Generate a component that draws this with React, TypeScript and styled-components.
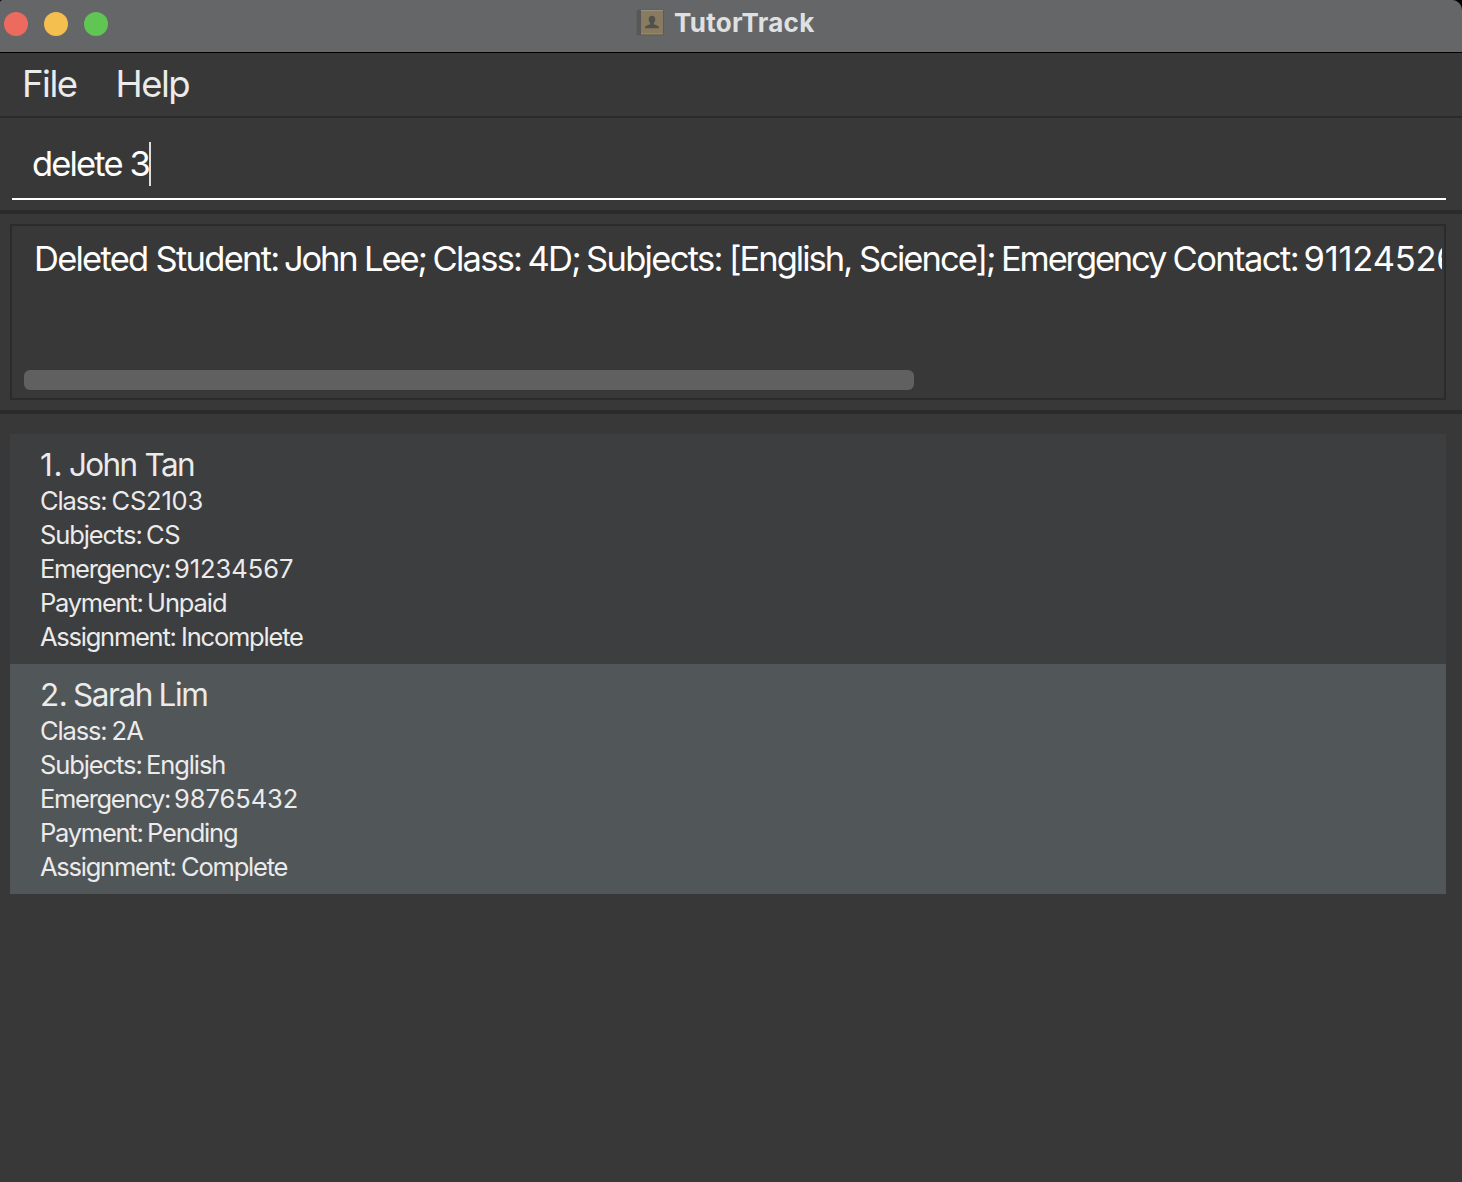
import React from "react";
import styled, { createGlobalStyle } from "styled-components";

const GlobalStyle = createGlobalStyle`
  html, body { margin: 0; padding: 0; background: #000; }
  * { box-sizing: border-box; }
`;

const Window = styled.div`
  width: 1462px;
  height: 1182px;
  display: flex;
  flex-direction: column;
  overflow: hidden;
  background: #383838;
  border-bottom: 1px solid #3e383c;
  border-radius: 3px 10px 0 0;
  font-family: Inter, "Liberation Sans", sans-serif;
  font-weight: 400;
  white-space: pre;
`;

const TitleBar = styled.header`
  flex: none;
  height: 53px;
  display: grid;
  grid-template-columns: 636px 1fr;
  background: #656667;
  border-bottom: 1px solid #000;
`;

const Lights = styled.div`
  display: flex;
  gap: 16px;
  padding: 12px 0 0 4px;
`;

const Light = styled.span<{ $color: string }>`
  width: 24px;
  height: 24px;
  border-radius: 50%;
  background: ${(p) => p.$color};
`;

const TitleGroup = styled.div`
  display: flex;
  align-items: flex-start;
  gap: 10px;
  padding-top: 9px;
`;

const Title = styled.h1`
  margin: -1px 0 0;
  font-size: 26px;
  line-height: 30px;
  font-weight: 700;
  letter-spacing: 0.3px;
  color: #dfe0e2;
`;

const MenuBar = styled.nav`
  flex: none;
  height: 65px;
  display: flex;
  gap: 39px;
  padding: 8px 0 0 22px;
  border-bottom: 2px solid #2b2b2b;
`;

const MenuItem = styled.span`
  font-size: 36.5px;
  line-height: 46px;
  letter-spacing: -1.5px;
  color: #ebebeb;
`;

const CommandPane = styled.section`
  flex: none;
  height: 96px;
  padding: 12px 16px 0 12px;
  border-bottom: 4px solid #2b2b2b;
`;

const CommandField = styled.div`
  height: 70px;
  display: flex;
  padding: 12px 0 0 20px;
  border-bottom: 2px solid #fff;
  font-size: 34.5px;
  line-height: 44px;
  color: #fff;
`;

const Caret = styled.span`
  width: 2px;
  height: 44px;
  background: #ddd;
`;

const ResultPane = styled.section`
  flex: none;
  height: 200px;
  padding: 10px 16px 0 10px;
  border-bottom: 4px solid #2b2b2b;
`;

const ResultBox = styled.div`
  height: 176px;
  display: flex;
  flex-direction: column;
  justify-content: space-between;
  padding: 11px 2px 8px 12px;
  border: 2px solid #2b2b2b;
`;

const ResultText = styled.div`
  height: 50px;
  display: flex;
  padding-left: 10px;
  overflow: hidden;
  font-size: 34.5px;
  line-height: 44px;
  color: #fff;
`;

const ScrollThumb = styled.div`
  width: 890px;
  height: 20px;
  border-radius: 6px;
  background: #606060;
`;

const StudentList = styled.ol`
  list-style: none;
  margin: 0;
  padding: 20px 16px 0 10px;
`;

const StudentCard = styled.li<{ $selected: boolean }>`
  height: 230px;
  padding: 11px 0 0 30px;
  background: ${(p) => (p.$selected ? "#515658" : "#3c3e3f")};
`;

const StudentName = styled.h2`
  display: flex;
  height: 39px;
  margin: 0;
  font-size: 31.5px;
  line-height: 40px;
  font-weight: 400;
  color: #ebebeb;
`;

const Detail = styled.div`
  display: flex;
  font-size: 25.5px;
  line-height: 34px;
  color: #ebebeb;
`;

const Word = styled.span<{ $width: number; $spacing: number }>`
  flex: none;
  width: ${(p) => p.$width}px;
  letter-spacing: ${(p) => p.$spacing}px;
`;

/* text, advance width, letter spacing */
type Run = [string, number, number];

const Runs = ({ runs }: { runs: Run[] }) => (
  <>
    {runs.map(([text, width, spacing]) => (
      <Word key={text} $width={width} $spacing={spacing}>
        {text}
      </Word>
    ))}
  </>
);

const ContactBook = () => (
  <svg width="28" height="28" viewBox="0 0 28 28">
    <rect x="0.5" y="0.5" width="27.5" height="26" rx="1.5" fill="#5d5b57" />
    <rect x="1" y="1" width="4" height="25" fill="#575757" />
    <rect x="5" y="1" width="22" height="24" fill="#897b60" />
    <rect x="5" y="1" width="22" height="1" fill="#969080" />
    <rect x="5" y="24" width="22" height="1.5" fill="#9a8455" />
    <path
      d="M16 6.7c2.1 0 3.300 1.500 3.300 3.600 0 1.600-.7 2.800-1.500 3.500v1.400l3.800 1.500c1 .4 1.400 1.200 1.400 2.600H9c0-1.400.3-2.200 1.300-2.600l3.800-1.500v-1.400c-.8-.7-1.500-1.900-1.500-3.500 0-2.100 1.300-3.600 3.400-3.600z"
      fill="#52504c"
    />
  </svg>
);

const command: Run[] = [
  ["delete ", 97.5, -1.85],
  ["3", 19.5, 0],
];

const result: Run[] = [
  ["Deleted ", 121.5, -1.75],
  ["Student: ", 128.5, -1.7],
  ["John ", 80, -2.2],
  ["Lee; ", 68.5, -2.1],
  ["Class: ", 95, -1.75],
  ["4D; ", 58.5, -1.7],
  ["Subjects: ", 143, -1.7],
  ["[English, ", 130, -2],
  ["Science]; ", 142, -1.95],
  ["Emergency ", 171.5, -2.15],
  ["Contact: ", 131, -1.55],
  ["91124526", 140, -0.2],
];

type Student = { selected: boolean; name: Run[]; fields: Run[][] };

const students: Student[] = [
  {
    selected: false,
    name: [
      ["1. ", 29, 0.6],
      ["John ", 75.5, -1.7],
      ["Tan", 60, -1.6],
    ],
    fields: [
      [["Class: ", 71.5, -1.15], ["CS2103", 120, -0.2]],
      [["Subjects: ", 106, -1.1], ["CS", 120, -0.5]],
      [["Emergency: ", 134, -1.3], ["91234567", 140, -0.05]],
      [["Payment: ", 107, -1.25], ["Unpaid", 120, -1.1]],
      [["Assignment: ", 141, -1.25], ["Incomplete", 140, -1.2]],
    ],
  },
  {
    selected: true,
    name: [
      ["2. ", 33, -0.5],
      ["Sarah ", 85.5, -1.4],
      ["Lim", 60, -1.4],
    ],
    fields: [
      [["Class: ", 71.5, -1.15], ["2A", 120, -0.8]],
      [["Subjects: ", 106, -1.1], ["English", 120, -1.1]],
      [["Emergency: ", 134, -1.3], ["98765432", 140, -0.05]],
      [["Payment: ", 107, -1.25], ["Pending", 120, -1.15]],
      [["Assignment: ", 141, -1.25], ["Complete", 140, -1.2]],
    ],
  },
];

export default function App() {
  return (
    <>
      <GlobalStyle />
      <Window>
        <TitleBar>
          <Lights>
            <Light $color="#ed6a5e" />
            <Light $color="#f5bf4f" />
            <Light $color="#61c554" />
          </Lights>
          <TitleGroup>
            <ContactBook />
            <Title>TutorTrack</Title>
          </TitleGroup>
        </TitleBar>
        <MenuBar>
          <MenuItem>File</MenuItem>
          <MenuItem>Help</MenuItem>
        </MenuBar>
        <CommandPane>
          <CommandField>
            <Runs runs={command} />
            <Caret />
          </CommandField>
        </CommandPane>
        <ResultPane>
          <ResultBox>
            <ResultText>
              <Runs runs={result} />
            </ResultText>
            <ScrollThumb />
          </ResultBox>
        </ResultPane>
        <StudentList>
          {students.map((s, i) => (
            <StudentCard key={i} $selected={s.selected}>
              <StudentName>
                <Runs runs={s.name} />
              </StudentName>
              {s.fields.map((runs) => (
                <Detail key={runs[0][0]}>
                  <Runs runs={runs} />
                </Detail>
              ))}
            </StudentCard>
          ))}
        </StudentList>
      </Window>
    </>
  );
}
